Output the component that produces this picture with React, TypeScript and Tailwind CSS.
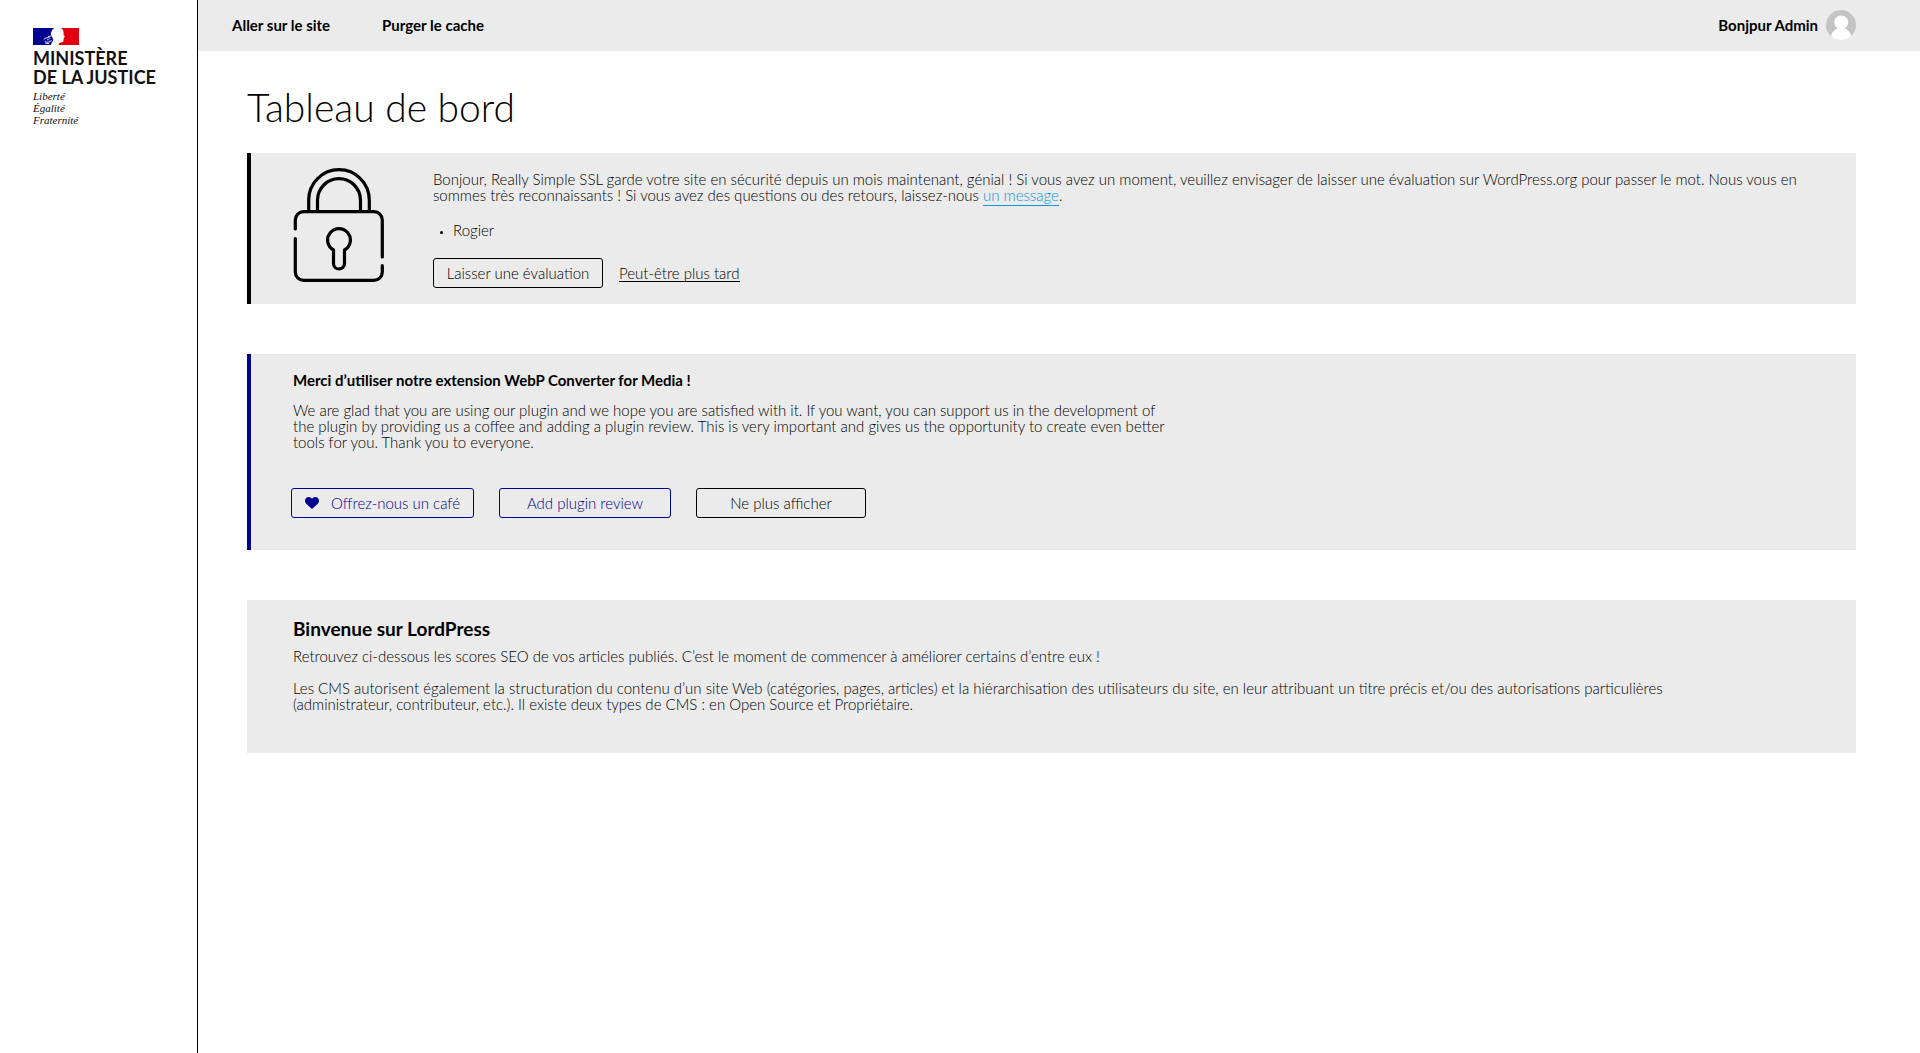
import React from "react";

function Logo() {
  return (
    <a href="#" className="block w-fit font-['Lato',sans-serif] text-[#111]" aria-label="Ministère de la Justice">
      <svg width="46" height="17" viewBox="0 0 46 17" aria-hidden="true">
        <path d="M0 0H21.5C19.6 0.900 18.600 2.200 18.500 3.800C17.800 4.600 17.600 5.600 18 6.600C18.200 7.800 18.800 8.600 19.400 9.600L20.200 11.600C20.400 13 19.400 14 18.600 14.800L17.800 17H0Z" fill="#000091" />
        <path d="M28 0H46V17H25.600C26 15 27 14.200 28.600 14.200C30 14.200 30.600 13.600 30.400 12.400L30.800 11.400L30.300 10.700L31 9.900C30.900 9.400 31.900 9.300 31.700 8.500C31.200 7.500 30.400 6.700 30.500 5.700C30.900 3.600 30.200 1.500 28 0Z" fill="#e1000f" />
        <path d="M10.800 11.400C12.300 9.700 15 9.200 17.400 10.200M11.800 13.600C13.600 14.700 16.600 14.500 18.800 12.400M14 12C14.700 11.400 15.900 11.500 16.300 12.300M12.400 15.300L16.200 15.700M14.800 8.600L18.200 7.900" stroke="#fff" strokeWidth="0.9" fill="none" />
      </svg>
      <span className="mt-1 block text-lg leading-[19px] font-bold">
        MINISTÈRE
        <br />
        DE LA JUSTICE
      </span>
      <span className="mt-[3px] block font-['Liberation_Serif',serif] text-[11px] leading-3 italic">
        Liberté
        <br />
        Égalité
        <br />
        Fraternité
      </span>
    </a>
  );
}

function Lock() {
  return (
    <svg width="92" height="116" viewBox="0 0 92 116" fill="none" stroke="#000" strokeWidth="3.2" strokeLinecap="round" className="shrink-0" aria-hidden="true">
      <path d="M15.700 44.700V33a30.300 30.300 0 0 1 60.600 0V44.700" strokeLinecap="butt" />
      <path d="M24.500 44.700V33.200a21.500 21.500 0 0 1 43 0V44.700" strokeLinecap="butt" />
      <path d="M2.300 62V53a8.300 8.300 0 0 1 8.300-8.300H81a8.300 8.300 0 0 1 8.300 8.300V90" />
      <path d="M2.300 71.500V105a8.300 8.300 0 0 0 8.300 8.300H81a8.300 8.300 0 0 0 8.300-8.300V98.500" />
      <path d="M40.500 83a11.400 11.400 0 1 1 11 0V96.500a5.500 5.500 0 0 1-11 0Z" strokeLinejoin="round" />
    </svg>
  );
}

function Avatar() {
  return (
    <svg width="30" height="30" viewBox="0 0 30 30" aria-hidden="true">
      <circle cx="15" cy="15" r="15" fill="#c4c4c4" />
      <path d="M4.800 26C6 22 8.500 19.400 11.600 18.400A7 7 0 1 1 18.800 18.400C21.800 19.400 24 22 25.200 26A15 15 0 0 1 4.800 26Z" fill="#fff" />
    </svg>
  );
}

function Heart() {
  return (
    <svg width="14" height="12" viewBox="0 0 14 12" fill="#000091" aria-hidden="true">
      <path d="M7 12L1.200 6.700C-.3 5.200-.4 2.600 1.100 1.100C2.600-.3 4.900-.3 6.300 1.100L7 1.900L7.700 1.100C9.100-.3 11.400-.3 12.900 1.100C14.400 2.600 14.300 5.200 12.800 6.700Z" />
    </svg>
  );
}

export default function App() {
  return (
    <div className="flex min-h-screen bg-white font-['Lato',sans-serif] text-[15px] leading-4 font-light text-black">
      <aside className="w-[198px] shrink-0 border-r border-black pt-7 pl-[33px]">
        <Logo />
      </aside>
      <div className="min-w-0 flex-1">
        <header className="flex h-[51px] items-center justify-between bg-[#ebebeb] pr-16 pb-0.5 pl-[34px] font-bold">
          <nav className="flex gap-[52px]">
            <a href="#">Aller sur le site</a>
            <a href="#">Purger le cache</a>
          </nav>
          <a href="#" className="flex items-center gap-2">
            Bonjpur Admin
            <Avatar />
          </a>
        </header>
        <main className="pt-[35px] pr-16 pb-12 pl-[49px]">
          <h1 className="text-[39px] leading-[42px]">Tableau de bord</h1>

          <section className="mt-[25px] flex gap-12 border-l-4 border-black bg-[#ebebeb] pt-[14px] pr-12 pb-4 pl-[42px]">
            <Lock />
            <div className="pt-1">
              <p>
                Bonjour, Really Simple SSL garde votre site en sécurité depuis un mois maintenant, génial ! Si vous avez un moment, veuillez envisager de laisser une évaluation sur WordPress.org pour passer le mot. Nous vous en sommes très reconnaissants ! Si vous avez des questions ou des retours, laissez-nous{" "}
                <a href="#" className="inline-block border-b border-[#0a95e0] pb-0.5 text-[#0a95e0]">un message</a>.
              </p>
              <ul className="mt-4 list-disc pl-5 marker:text-[9px]">
                <li>Rogier</li>
              </ul>
              <div className="mt-5 flex items-center gap-4">
                <button className="h-[30px] w-[170px] rounded-[3px] border border-black">Laisser une évaluation</button>
                <a href="#" className="border-b border-black">Peut-être plus tard</a>
              </div>
            </div>
          </section>

          <section className="mt-[50px] border-l-4 border-[#000091] bg-[#ebebeb] pt-[18px] pb-8 pl-[42px]">
            <h2 className="font-bold">Merci d’utiliser notre extension WebP Converter for Media !</h2>
            <p className="mt-[14px] max-w-[880px]">
              We are glad that you are using our plugin and we hope you are satisfied with it. If you want, you can support us in the development of the plugin by providing us a coffee and adding a plugin review. This is very important and gives us the opportunity to create even better tools for you. Thank you to everyone.
            </p>
            <div className="mt-[38px] -ml-0.5 flex gap-[25px]">
              <button className="flex h-[30px] w-[183px] items-center justify-center gap-3 rounded-[3px] border border-[#000091] text-[#000091]">
                <Heart />
                Offrez-nous un café
              </button>
              <button className="h-[30px] w-[172px] rounded-[3px] border border-[#000091] text-[#000091]">Add plugin review</button>
              <button className="h-[30px] w-[170px] rounded-[3px] border border-black">Ne plus afficher</button>
            </div>
          </section>

          <section className="mt-[50px] bg-[#ebebeb] pt-[18px] pr-10 pb-[41px] pl-[46px]">
            <h2 className="text-[19px] leading-[22px] font-bold">Binvenue sur LordPress</h2>
            <p className="mt-2">Retrouvez ci-dessous les scores SEO de vos articles publiés. C’est le moment de commencer à améliorer certains d’entre eux !</p>
            <p className="mt-4 max-w-[1400px]">
              Les CMS autorisent également la structuration du contenu d’un site Web (catégories, pages, articles) et la hiérarchisation des utilisateurs du site, en leur attribuant un titre précis et/ou des autorisations particulières (administrateur, contributeur, etc.). Il existe deux types de CMS : en Open Source et Propriétaire.
            </p>
          </section>
        </main>
      </div>
    </div>
  );
}
